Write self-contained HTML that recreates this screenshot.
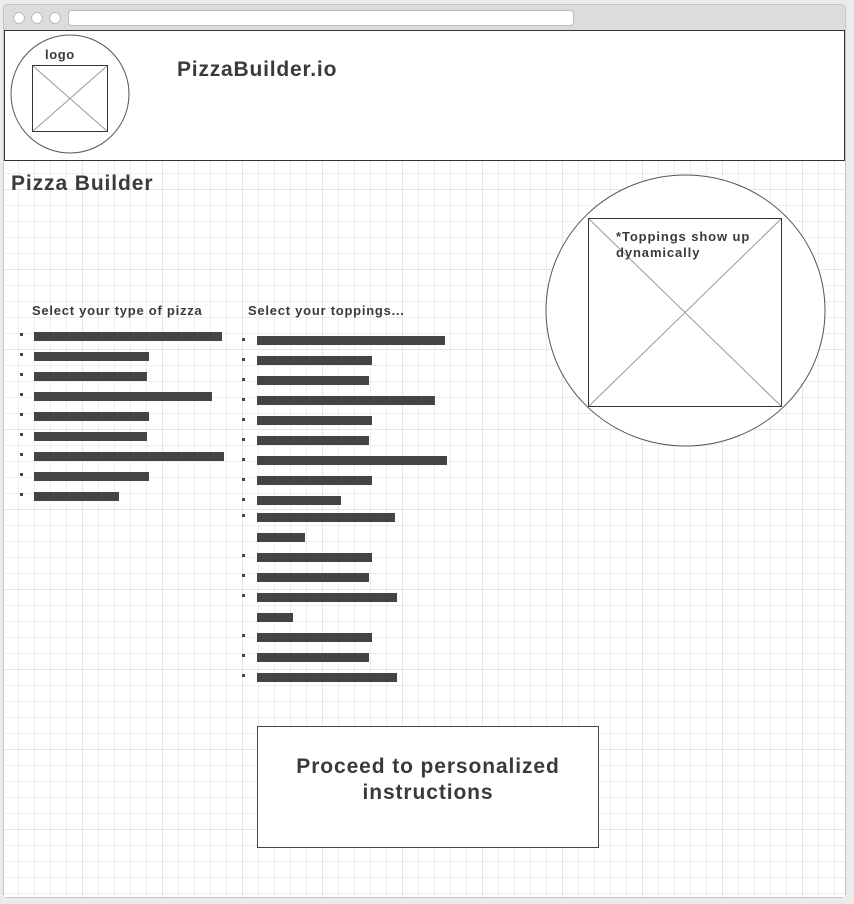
<!DOCTYPE html>
<html><head><style>
html,body{margin:0;padding:0;background:#fff;width:854px;height:904px;overflow:hidden}
text{font-family:"Liberation Sans",Arial,sans-serif;font-weight:bold;fill:#3a3a3a}
</style></head><body>
<svg width="854" height="904" xmlns="http://www.w3.org/2000/svg">
<defs>
<pattern id="g" x="2" y="13" width="16" height="16" patternUnits="userSpaceOnUse">
<path d="M0 0.5H16M0.5 0V16" stroke="#ededed" stroke-width="1" fill="none"/>
</pattern>
<pattern id="G" x="2" y="29" width="80" height="80" patternUnits="userSpaceOnUse">
<path d="M0 0.5H80M0.5 0V80" stroke="#e5e5e5" stroke-width="1" fill="none"/>
</pattern>
</defs>
<rect x="0" y="0" width="854" height="904" fill="#ebebeb"/>
<rect x="3.5" y="4.5" width="842" height="893" rx="4" fill="#dcdcdc" stroke="#c4c4c4"/>
<circle cx="19" cy="18" r="5.5" fill="#fff" stroke="#bbb"/>
<circle cx="37" cy="18" r="5.5" fill="#fff" stroke="#bbb"/>
<circle cx="55" cy="18" r="5.5" fill="#fff" stroke="#bbb"/>
<rect x="68.5" y="10.5" width="505" height="15" rx="3" fill="#fff" stroke="#bbb"/>
<rect x="4" y="160" width="841" height="737" fill="#fff"/>
<rect x="4" y="160" width="841" height="737" fill="url(#g)"/>
<rect x="4" y="160" width="841" height="737" fill="url(#G)"/>
<rect x="4.5" y="30.5" width="840" height="130" fill="#fff" stroke="#333"/>
<circle cx="70" cy="94" r="59" fill="#fff" stroke="#555"/>
<rect x="32.5" y="65.5" width="75" height="66" fill="#fff" stroke="#333"/>
<path d="M33 66L107 131M107 66L33 131" stroke="#999"/>
<text x="45" y="59" font-size="13" letter-spacing="0.6">logo</text>
<text x="177" y="76" font-size="21" letter-spacing="0.8">PizzaBuilder.io</text>
<text x="11" y="190" font-size="21" letter-spacing="0.9">Pizza Builder</text>
<ellipse cx="685.5" cy="310.5" rx="139.5" ry="135.5" fill="#fff" stroke="#555"/>
<rect x="588.5" y="218.5" width="193" height="188" fill="#fff" stroke="#333"/>
<path d="M589 219L781 406M781 219L589 406" stroke="#999"/>
<text x="616" y="241" font-size="13" letter-spacing="0.9">*Toppings show up</text>
<text x="616" y="257" font-size="13" letter-spacing="0.9">dynamically</text>
<text x="32" y="315" font-size="13" letter-spacing="0.75">Select your type of pizza</text>
<text x="248" y="315" font-size="13" letter-spacing="0.75">Select your toppings...</text>
<g fill="#444">
<rect x="34" y="332" width="188" height="9"/><rect x="20" y="333" width="3" height="3"/>
<rect x="34" y="352" width="115" height="9"/><rect x="20" y="353" width="3" height="3"/>
<rect x="34" y="372" width="113" height="9"/><rect x="20" y="373" width="3" height="3"/>
<rect x="34" y="392" width="178" height="9"/><rect x="20" y="393" width="3" height="3"/>
<rect x="34" y="412" width="115" height="9"/><rect x="20" y="413" width="3" height="3"/>
<rect x="34" y="432" width="113" height="9"/><rect x="20" y="433" width="3" height="3"/>
<rect x="34" y="452" width="190" height="9"/><rect x="20" y="453" width="3" height="3"/>
<rect x="34" y="472" width="115" height="9"/><rect x="20" y="473" width="3" height="3"/>
<rect x="34" y="492" width="85" height="9"/><rect x="20" y="493" width="3" height="3"/>

<rect x="257" y="336" width="188" height="9"/><rect x="242" y="338" width="3" height="3"/>
<rect x="257" y="356" width="115" height="9"/><rect x="242" y="358" width="3" height="3"/>
<rect x="257" y="376" width="112" height="9"/><rect x="242" y="378" width="3" height="3"/>
<rect x="257" y="396" width="178" height="9"/><rect x="242" y="398" width="3" height="3"/>
<rect x="257" y="416" width="115" height="9"/><rect x="242" y="418" width="3" height="3"/>
<rect x="257" y="436" width="112" height="9"/><rect x="242" y="438" width="3" height="3"/>
<rect x="257" y="456" width="190" height="9"/><rect x="242" y="458" width="3" height="3"/>
<rect x="257" y="476" width="115" height="9"/><rect x="242" y="478" width="3" height="3"/>
<rect x="257" y="496" width="84" height="9"/><rect x="242" y="498" width="3" height="3"/>
<rect x="257" y="513" width="138" height="9"/><rect x="242" y="514" width="3" height="3"/>
<rect x="257" y="533" width="48" height="9"/>
<rect x="257" y="553" width="115" height="9"/><rect x="242" y="554" width="3" height="3"/>
<rect x="257" y="573" width="112" height="9"/><rect x="242" y="574" width="3" height="3"/>
<rect x="257" y="593" width="140" height="9"/><rect x="242" y="594" width="3" height="3"/>
<rect x="257" y="613" width="36" height="9"/>
<rect x="257" y="633" width="115" height="9"/><rect x="242" y="634" width="3" height="3"/>
<rect x="257" y="653" width="112" height="9"/><rect x="242" y="654" width="3" height="3"/>
<rect x="257" y="673" width="140" height="9"/><rect x="242" y="674" width="3" height="3"/>
</g>
<rect x="257.5" y="726.5" width="341" height="121" fill="#fff" stroke="#444"/>
<text x="428" y="773" font-size="21" text-anchor="middle" letter-spacing="0.9">Proceed to personalized</text>
<text x="428" y="799" font-size="21" text-anchor="middle" letter-spacing="0.9">instructions</text>
</svg>
</body></html>
